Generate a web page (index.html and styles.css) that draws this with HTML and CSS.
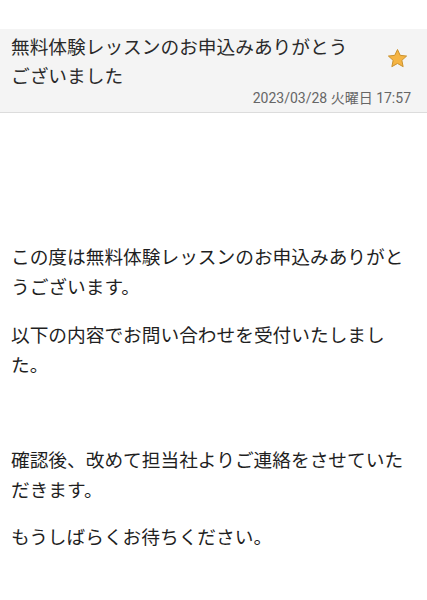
FILE: index.html
```html
<!DOCTYPE html>
<html lang="ja">
<head>
<meta charset="utf-8">
<link rel="stylesheet" href="styles.css">
</head>
<body>
<div class="top-space"></div>
<header class="mail-header">
  <div class="title-row">
    <h1 class="title">無料体験レッスンのお申込みありがとうございました</h1>
    <svg class="star" viewBox="0 0 24 24" width="23" height="23" aria-hidden="true">
      <path d="M12 2.6l2.85 6.1 6.65.75-4.95 4.5 1.35 6.6L12 17.2l-5.9 3.35 1.35-6.6-4.95-4.5 6.65-.75z" fill="#f5b443" stroke="#c98f2a" stroke-width="1" stroke-linejoin="round"/>
    </svg>
  </div>
  <div class="date">2023/03/28 火曜日 17:57</div>
</header>
<main class="mail-body">
  <p>この度は無料体験レッスンのお申込みありがとうございます。</p>
  <p>以下の内容でお問い合わせを受付いたしました。</p>
  <p><br></p>
  <p>確認後、改めて担当社よりご連絡をさせていただきます。</p>
  <p>もうしばらくお待ちください。</p>
</main>
</body>
</html>
```
FILE: styles.css
```css
html, body {
  margin: 0;
  padding: 0;
  background: #ffffff;
}
body {
  font-family: "Noto Sans CJK JP", "Noto Sans", sans-serif;
  color: #1f1f1f;
}
.top-space {
  height: 29px;
}
.mail-header {
  background: #f4f4f4;
  border-bottom: 1px solid #dcdcdc;
  padding: 3px 18px 4px 11px;
  height: 76px;
}
.title-row {
  display: flex;
  align-items: flex-start;
}
.title {
  margin: 0;
  width: 345px;
  font-size: 18.7px;
  line-height: 28.5px;
  font-weight: 400;
  color: #2a2a2a;
}
.star {
  margin-left: auto;
  margin-top: 15px;
  flex: none;
}
.date {
  text-align: right;
  font-family: Roboto, "Noto Sans CJK JP", sans-serif;
  font-size: 14px;
  line-height: 18px;
  color: #666;
  margin-top: 0;
  margin-right: -2px;
}
.mail-body {
  padding: 128px 11px 20px 11px;
  font-size: 18.7px;
  line-height: 30px;
}
.mail-body p {
  margin: 0 0 17.5px 0;
}
```
